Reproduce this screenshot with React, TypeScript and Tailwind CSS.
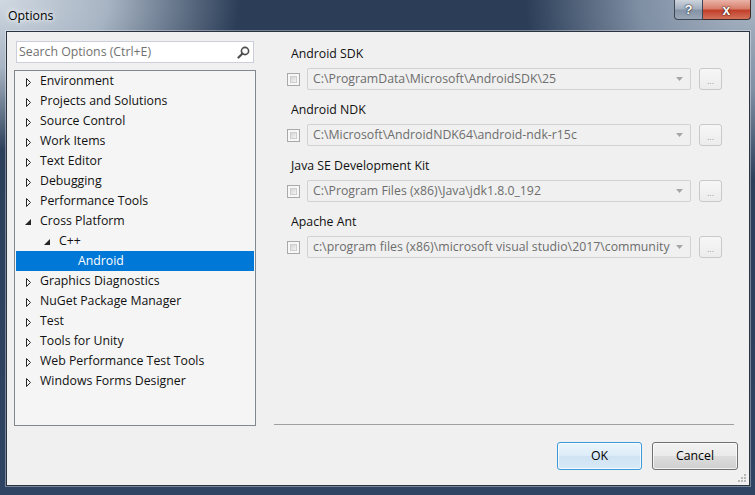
import React from "react";

type Item = { label: string; level: 0 | 1 | 2; state: "collapsed" | "expanded" | "leaf"; selected?: boolean };

const items: Item[] = [
  { label: "Environment", level: 0, state: "collapsed" },
  { label: "Projects and Solutions", level: 0, state: "collapsed" },
  { label: "Source Control", level: 0, state: "collapsed" },
  { label: "Work Items", level: 0, state: "collapsed" },
  { label: "Text Editor", level: 0, state: "collapsed" },
  { label: "Debugging", level: 0, state: "collapsed" },
  { label: "Performance Tools", level: 0, state: "collapsed" },
  { label: "Cross Platform", level: 0, state: "expanded" },
  { label: "C++", level: 1, state: "expanded" },
  { label: "Android", level: 2, state: "leaf", selected: true },
  { label: "Graphics Diagnostics", level: 0, state: "collapsed" },
  { label: "NuGet Package Manager", level: 0, state: "collapsed" },
  { label: "Test", level: 0, state: "collapsed" },
  { label: "Tools for Unity", level: 0, state: "collapsed" },
  { label: "Web Performance Test Tools", level: 0, state: "collapsed" },
  { label: "Windows Forms Designer", level: 0, state: "collapsed" },
];

const levelPad = ["pl-[10px]", "pl-[29px]", "pl-[48px]"];

function TreeRow({ item }: { item: Item }) {
  return (
    <div
      className={
        "h-[20px] mx-[1px] flex items-center " +
        levelPad[item.level] +
        (item.selected ? " bg-[#0078d7] text-white" : " text-[#111111]")
      }
    >
      <div className="w-[14px] h-[20px] flex items-center">
        {item.state === "collapsed" && (
          <svg width="6" height="10" className="mt-[3px]">
            <polygon points="0.5,0.5 4.5,4.5 0.5,8.5" fill="none" stroke="#262626" strokeWidth="1" />
          </svg>
        )}
        {item.state === "expanded" && (
          <svg width="7" height="7" className="-ml-[1px] mt-[2px]">
            <polygon points="6,0 6,6 0,6" fill="#262626" />
          </svg>
        )}
      </div>
      <span className="text-[12.3px] leading-[16px] whitespace-nowrap">{item.label}</span>
    </div>
  );
}

function Checkbox() {
  return (
    <div className="w-[13px] h-[13px] shrink-0 border border-[#a9a9a9] bg-[#f7f7f7] p-[2px] ml-[13px]">
      <div className="w-full h-full bg-[linear-gradient(135deg,#d4d4d4,#f4f4f4)] border border-[#cfcfcf]" />
    </div>
  );
}

function PathRow({ label, value }: { label: string; value: string }) {
  return (
    <div className="flex flex-col">
      <div className="pl-[17px] h-[18px] text-[12.3px] leading-[18px] text-[#111111] whitespace-nowrap">{label}</div>
      <div className="mt-[5px] h-[22px] flex items-center">
        <Checkbox />
        <div className="ml-[7px] w-[384px] shrink-0 h-[22px] border border-[#d2d2d2] rounded-[2px] bg-[#f0f0f0] flex items-center overflow-hidden">
          <div className="w-[363px] shrink-0 pl-[5px] overflow-hidden h-[16px]">
            <span className="block whitespace-nowrap text-[12.3px] leading-[16px] text-[#6d6d6d]">{value}</span>
          </div>
          <div className="w-[18px] shrink-0 h-[20px] flex items-center justify-center bg-[#f0f0f0] relative z-10">
            <svg width="8" height="5">
              <polygon points="0,0 7,0 3.5,4" fill="#a6a6a6" />
            </svg>
          </div>
        </div>
        <div className="ml-[8px] w-[23px] shrink-0 h-[22px] border border-[#c9c9c9] rounded-[3px] bg-[linear-gradient(180deg,#f6f6f6,#ececec)] flex items-end justify-center pb-[4px]">
          <span className="text-[9px] leading-[9px] text-[#a0a0a0]">...</span>
        </div>
      </div>
    </div>
  );
}

export default function App() {
  return (
    <div className="w-[755px] h-[495px] flex flex-col font-['Open_Sans',sans-serif] bg-[radial-gradient(ellipse_240px_150px_at_0%_0%,#d0d8e1_0%,#a7b4c3_45%,transparent_100%),radial-gradient(ellipse_230px_180px_at_100%_0%,#aab6c4_0%,#7f8fa4_50%,transparent_100%),linear-gradient(180deg,#2b3d57_0%,#2f4463_100%)] overflow-hidden">
      {/* title bar */}
      <div className="h-[31px] flex items-start shrink-0">
        <div className="pl-[8px] pt-[8px] text-[12.3px] leading-[16px] text-black [text-shadow:0_0_8px_#ffffff,0_0_4px_#ffffff]">
          Options
        </div>
        <div className="ml-auto mr-[4px] flex">
          <div className="w-[29px] h-[20px] border border-t-0 border-[#3d4654] rounded-bl-[4px] bg-[linear-gradient(180deg,#cdd4dd_0%,#a4b0bf_45%,#8493a6_55%,#9aa7b7_100%)] flex items-center justify-center">
            <span className="font-['Liberation_Sans'] font-bold text-[13px] leading-[13px] text-white [text-shadow:0_0_1px_#1b2430,0_0_2px_#1b2430]">?</span>
          </div>
          <div className="w-[48px] h-[20px] border border-t-0 border-l-0 border-[#3d2a2a] rounded-br-[4px] bg-[linear-gradient(180deg,#eab3a8_0%,#d77f6c_45%,#c2402a_55%,#d4725b_100%)] flex items-center justify-center">
            <span className="font-['Liberation_Sans'] font-bold text-[14px] leading-[14px] text-white [text-shadow:0_0_1px_#3a1410,0_0_2px_#3a1410]">x</span>
          </div>
        </div>
      </div>

      {/* client */}
      <div className="ml-[6px] mr-[5px] h-[455px] shrink-0 border border-[#2b3340] bg-[#f0f0f0] flex flex-col relative shadow-[0_0_0_1px_rgba(255,255,255,0.35)]">
        <div className="flex pt-[9px]">
          {/* left column */}
          <div className="ml-[7px] w-[242px] flex flex-col">
            <div className="mx-[2px] h-[22px] border border-[#cccedb] bg-white flex items-center pl-[2px] pr-[2px]">
              <span className="flex-1 text-[12.3px] leading-[16px] text-[#717171] whitespace-nowrap">Search Options (Ctrl+E)</span>
              <svg width="13" height="13" viewBox="0 0 13 13" className="mr-[1px]">
                <circle cx="8" cy="5" r="3.6" fill="none" stroke="#4d4d4d" strokeWidth="1.6" />
                <line x1="5.5" y1="7.5" x2="1.5" y2="11.5" stroke="#4d4d4d" strokeWidth="2.2" strokeLinecap="round" />
              </svg>
            </div>
            <div className="mt-[7px] h-[356px] border border-[#828790] bg-[#f5f5f5] flex flex-col">
              {items.map((it) => (
                <TreeRow key={it.label} item={it} />
              ))}
            </div>
          </div>

          {/* right column */}
          <div className="ml-[18px] w-[460px] flex flex-col">
            <div className="pt-[4px] flex flex-col gap-[11px]">
              <PathRow label="Android SDK" value="C:\ProgramData\Microsoft\AndroidSDK\25" />
              <PathRow label="Android NDK" value="C:\Microsoft\AndroidNDK64\android-ndk-r15c" />
              <PathRow label="Java SE Development Kit" value="C:\Program Files (x86)\Java\jdk1.8.0_192" />
              <PathRow label="Apache Ant" value="c:\program files (x86)\microsoft visual studio\2017\community" />
            </div>
            <div className="flex-1" />
            <div className="h-px bg-[#a0a0a0] mb-[1px]" />
          </div>
        </div>

        {/* buttons */}
        <div className="flex justify-end gap-[10px] pr-[11px] mt-[16px]">
          <div className="w-[85px] h-[28px] rounded-[3px] border border-[#3c9ad8] bg-[linear-gradient(180deg,#ecf5fc_0%,#dcecf8_50%,#cfe3f3_51%,#d8e9f6_100%)] shadow-[inset_0_0_0_1px_rgba(255,255,255,0.7)] flex items-center justify-center">
            <span className="text-[12.3px] leading-[16px] text-black">OK</span>
          </div>
          <div className="w-[86px] h-[28px] rounded-[3px] border border-[#707070] bg-[linear-gradient(180deg,#f2f2f2_0%,#ebebeb_50%,#dddddd_51%,#cfcfcf_100%)] shadow-[inset_0_0_0_1px_rgba(255,255,255,0.7)] flex items-center justify-center">
            <span className="text-[12.3px] leading-[16px] text-black">Cancel</span>
          </div>
        </div>

        {/* resize grip */}
        <svg width="10" height="10" className="absolute right-[2px] bottom-[2px]">
          <rect x="7" y="1" width="2" height="2" fill="#b8b8b8" />
          <rect x="4" y="4" width="2" height="2" fill="#b8b8b8" />
          <rect x="7" y="4" width="2" height="2" fill="#b8b8b8" />
          <rect x="1" y="7" width="2" height="2" fill="#b8b8b8" />
          <rect x="4" y="7" width="2" height="2" fill="#b8b8b8" />
          <rect x="7" y="7" width="2" height="2" fill="#b8b8b8" />
        </svg>
      </div>
    </div>
  );
}
